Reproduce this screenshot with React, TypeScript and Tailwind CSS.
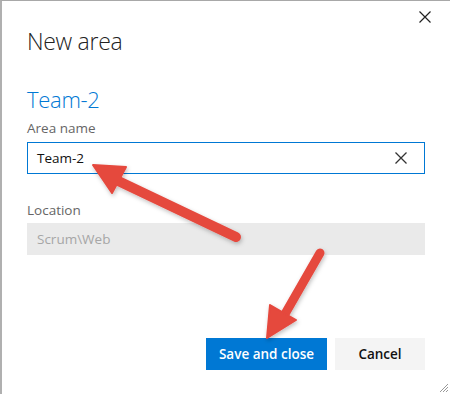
import React from "react";

const font = { fontFamily: '"Open Sans", "Noto Sans", sans-serif' };

function XIcon({ size = 12, stroke = "#333", width = 1.2 }: { size?: number; stroke?: string; width?: number }) {
  return (
    <svg width={size} height={size} viewBox="0 0 12 12" fill="none">
      <path d="M0.5 0.5 L11.5 11.5 M11.5 0.5 L0.5 11.5" stroke={stroke} strokeWidth={width} />
    </svg>
  );
}

export default function App() {
  return (
    <div
      className="relative w-[450px] h-[394px] bg-white border-t border-l-2 border-t-[#a8a8a8] border-l-[#b0b0b0] overflow-hidden"
      style={font}
    >
      <div className="flex flex-col pl-[25px] pr-[25px]">
        <div className="flex justify-end h-[22px] pt-[10px] -mr-[6px]">
          <XIcon size={12} stroke="#222" />
        </div>
        <h1 className="mt-[2px] text-[23px] leading-[32px] font-light text-[#222] tracking-[-0.3px]">New area</h1>
        <h2 className="mt-[27px] text-[22px] leading-[30px] font-light text-[#0078d4] tracking-[-0.3px]">Team-2</h2>
        <label className="mt-[5px] text-[13.5px] leading-[18px] text-[#666]">Area name</label>
        <div className="mt-[5px] h-[32px] border border-[#0078d4] flex items-center pl-[9px] pr-[17px]">
          <span className="flex-1 text-[13.5px] text-[#111]">Team-2</span>
          <XIcon size={12} stroke="#333" width={1.3} />
        </div>
        <label className="mt-[27px] text-[13.5px] leading-[18px] text-[#666]">Location</label>
        <div className="mt-[4px] h-[32px] bg-[#eaeaea] flex items-center pl-[10px]">
          <span className="text-[13.5px] text-[#a6a6a6]">Scrum\Web</span>
        </div>
        <div className="mt-[83px] flex justify-end gap-[8px]">
          <button className="h-[32px] w-[121px] bg-[#0078d4] text-white text-[13.5px] font-semibold">Save and close</button>
          <button className="h-[32px] w-[90px] bg-[#f4f4f4] text-[#111] text-[13.5px] font-semibold">Cancel</button>
        </div>
      </div>

      {/* resize grip */}
      <svg className="absolute right-[1px] bottom-[1px]" width="12" height="12" viewBox="0 0 12 12">
        <path d="M11 3 L3 11 M11 6 L6 11 M11 9 L9 11" stroke="#999" strokeWidth="1" />
      </svg>

      {/* annotation arrows */}
      <svg className="absolute left-0 top-0 pointer-events-none" width="450" height="394" viewBox="0 0 450 394" style={{ left: -2, top: -1 }}>
        <defs>
          <filter id="sh" x="-20%" y="-20%" width="140%" height="140%">
            <feDropShadow dx="1" dy="2" stdDeviation="2" floodColor="#000" floodOpacity="0.25" />
          </filter>
        </defs>
        <g filter="url(#sh)" fill="#e5483e" stroke="#e5483e" strokeLinecap="round" strokeLinejoin="round">
          <line x1="236" y1="237" x2="112" y2="178" strokeWidth="10" />
          <polygon points="93,165 126,167 112,193" strokeWidth="2" />
          <line x1="320" y1="253" x2="285" y2="314" strokeWidth="9" />
          <polygon points="267,338 270,305 296,320" strokeWidth="2" />
        </g>
      </svg>
    </div>
  );
}
